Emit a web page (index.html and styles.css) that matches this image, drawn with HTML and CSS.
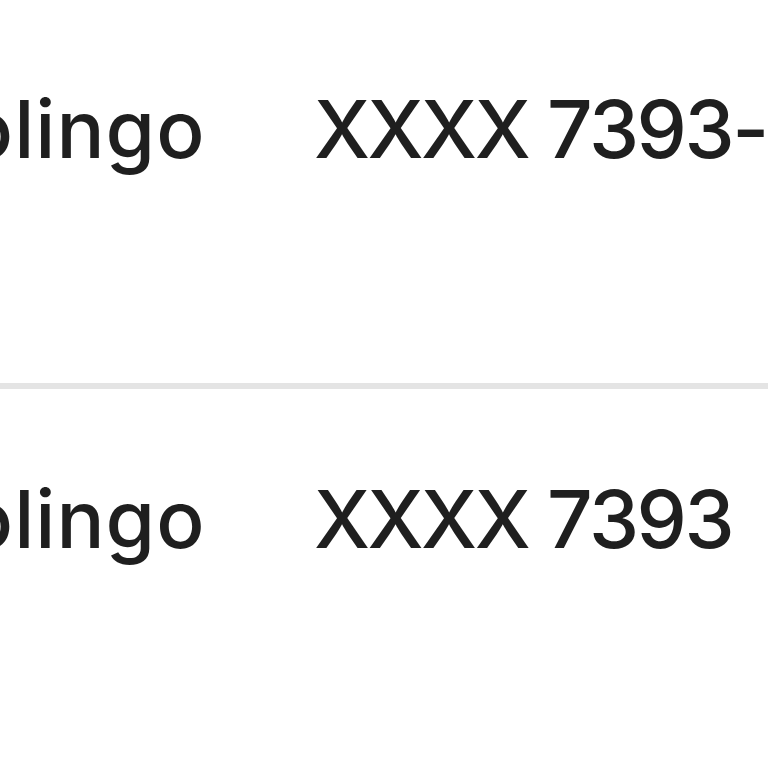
FILE: index.html
```html
<!DOCTYPE html>
<html lang="en">
<head>
    <meta charset="UTF-8">
    <title>Subscriptions</title>
    <link rel="stylesheet" href="styles.css">
</head>
<body>
    <div class="list">
        <div class="row">
            <span class="merchant">Duolingo</span>
            <span class="card">XXXX 7393-0042</span>
        </div>
        <div class="row">
            <span class="merchant">Duolingo</span>
            <span class="card">XXXX 7393</span>
        </div>
    </div>
</body>
</html>
```

FILE: styles.css
```css
* {
    margin: 0;
    padding: 0;
    box-sizing: border-box;
}

body {
    font-family: Inter, Roboto, "Liberation Sans", sans-serif;
    background-color: #ffffff;
    color: #1f1f1f;
    overflow: hidden;
    width: 768px;
    height: 768px;
}

.list {
    margin-left: -143px;
    margin-top: -1px;
}

.row {
    display: flex;
    align-items: baseline;
    height: 390px;
    padding-top: 80px;
    border-bottom: 6px solid #e4e4e4;
    white-space: nowrap;
    font-size: 80px;
    font-weight: 500;
    line-height: 100px;
}

.merchant {
    width: 457px;
    flex-shrink: 0;
    letter-spacing: 1px;
}

.card {
    flex-shrink: 0;
    letter-spacing: -2.5px;
}
```
